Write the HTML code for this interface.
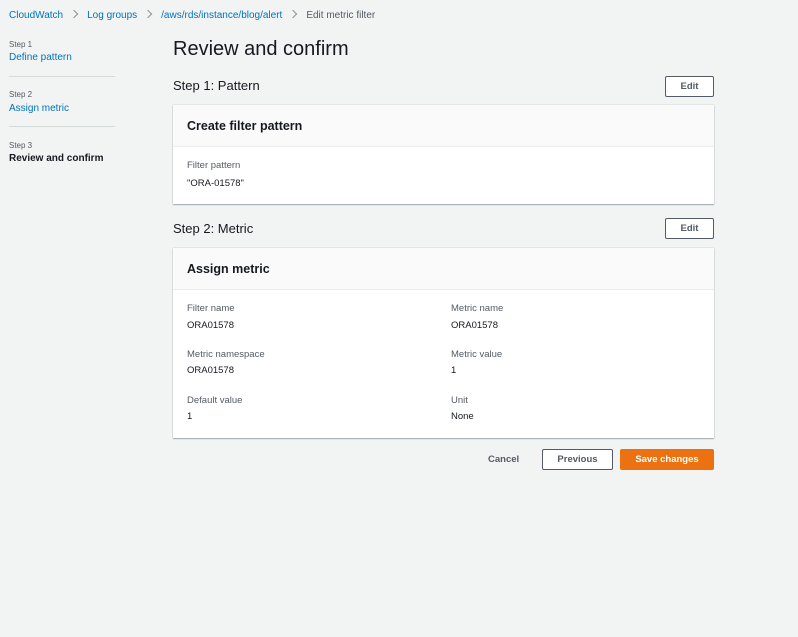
<!DOCTYPE html>
<html><head><meta charset="utf-8"><style>
*{box-sizing:border-box;margin:0;padding:0}
body{width:798px;height:637px;background:#f2f3f3;font-family:"Liberation Sans",Arial,sans-serif;color:#16191f;position:relative;overflow:hidden;font-size:10px}
.a{position:absolute;white-space:nowrap}
.link{color:#0073bb}
.sep{display:inline-block;width:6px;height:6px;border-top:1px solid #879596;border-right:1px solid #879596;transform:rotate(45deg);margin:0 10px 1px 8px}
.small{font-size:8px;color:#545b64}
.line{position:absolute;left:9px;width:106px;height:1px;background:#d5dbdb}
.card{position:absolute;left:173px;width:541px;background:#fff;box-shadow:0 1px 1px rgba(0,28,36,.3),0 0 1px rgba(0,28,36,.3)}
.ch{height:42px;background:#fafafa;border-bottom:1px solid #eaeded;padding:14px 14px;font-weight:bold;font-size:12.5px}
.lbl{color:#545b64;font-size:9.5px}
.val{font-size:9.5px}
.btn{position:absolute;height:21px;border:1px solid #545b64;background:#fff;font-weight:bold;font-size:9.5px;color:#545b64;text-align:center;line-height:19px;border-radius:2px}
</style></head><body>
<div class="a" style="top:10px;left:9px;font-size:10px"><span class="link">CloudWatch</span><span class="sep"></span><span class="link">Log groups</span><span class="sep"></span><span class="link">/aws/rds/instance/blog/alert</span><span class="sep"></span><span style="color:#545b64">Edit metric filter</span></div>
<div class="a small" style="top:40px;left:9px">Step 1</div>
<div class="a link" style="top:52px;left:9px">Define pattern</div>
<div class="line" style="top:76px"></div>
<div class="a small" style="top:90px;left:9px">Step 2</div>
<div class="a link" style="top:103px;left:9px">Assign metric</div>
<div class="line" style="top:126px"></div>
<div class="a small" style="top:141px;left:9px">Step 3</div>
<div class="a" style="top:153px;left:9px;font-weight:bold">Review and confirm</div>
<div class="a" style="top:38px;left:173px;font-size:20px">Review and confirm</div>
<div class="a" style="top:78px;left:173px;font-size:13px">Step 1: Pattern</div>
<div class="btn" style="top:76px;left:665px;width:49px">Edit</div>
<div class="card" style="top:105px;height:99px"><div class="ch">Create filter pattern</div>
<div class="a lbl" style="top:55px;left:14px">Filter pattern</div><div class="a val" style="top:73px;left:14px">"ORA-01578"</div></div>
<div class="a" style="top:221px;left:173px;font-size:13px">Step 2: Metric</div>
<div class="btn" style="top:218px;left:665px;width:49px">Edit</div>
<div class="card" style="top:248px;height:190px"><div class="ch">Assign metric</div>
<div class="a lbl" style="top:55px;left:14px">Filter name</div><div class="a val" style="top:72px;left:14px">ORA01578</div>
<div class="a lbl" style="top:55px;left:278px">Metric name</div><div class="a val" style="top:72px;left:278px">ORA01578</div>
<div class="a lbl" style="top:101px;left:14px">Metric namespace</div><div class="a val" style="top:117px;left:14px">ORA01578</div>
<div class="a lbl" style="top:101px;left:278px">Metric value</div><div class="a val" style="top:117px;left:278px">1</div>
<div class="a lbl" style="top:147px;left:14px">Default value</div><div class="a val" style="top:163px;left:14px">1</div>
<div class="a lbl" style="top:147px;left:278px">Unit</div><div class="a val" style="top:163px;left:278px">None</div></div>
<div class="a" style="top:454px;left:488px;font-weight:bold;font-size:9.5px;color:#545b64">Cancel</div>
<div class="btn" style="top:449px;left:542px;width:71px">Previous</div>
<div class="btn" style="top:449px;left:620px;width:94px;background:#ec7211;border-color:#ec7211;color:#fff">Save changes</div>
</body></html>
